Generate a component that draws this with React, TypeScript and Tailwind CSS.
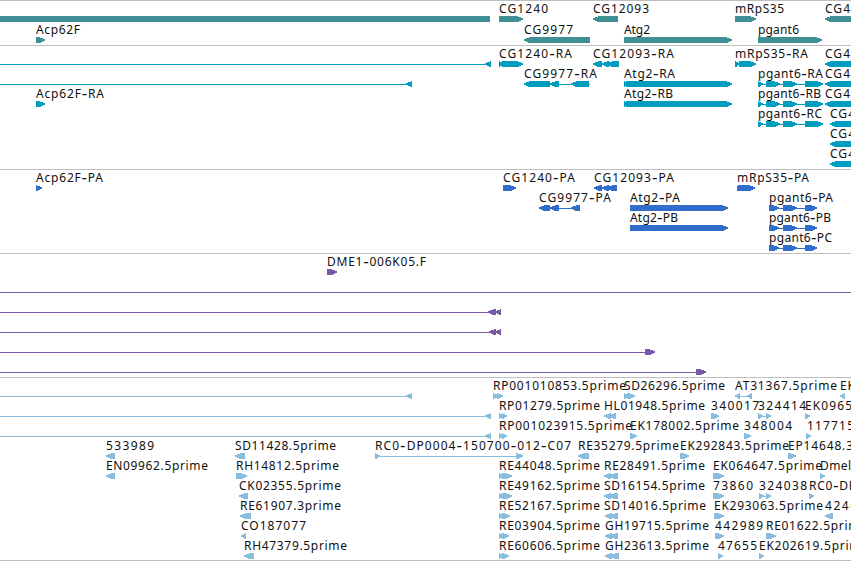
import React from 'react';

type Dir = 'l' | 'r' | 'n';
type Exon = [number, number, Dir];
type Label = [string, number, number];
interface Row {
  labels?: Label[];
  exons?: Exon[];
  lines?: [number, number][];
}
interface TrackData {
  height: number;
  color: string;
  pitch: number;
  rows: Row[];
}

// How far the pointed end is set back on each pixel row of the 6px glyph.
const TAPER = [5, 2, 0, 0, 2, 4];

function exonPath([a, b, dir]: Exon, y: number): string {
  if (dir === 'n') return `M${a} ${y}H${b}V${y + 6}H${a}Z`;
  const scale = Math.min(1, (b - a) / 6);
  return TAPER.map((t, i) => {
    const inset = Math.round(t * scale);
    const s = dir === 'l' ? a + inset : a;
    const e = dir === 'r' ? b - inset : b;
    return `M${s} ${y + i}H${e}v1H${s}Z`;
  }).join('');
}

const pgRna: Exon[] = [[758, 763, 'r'], [766, 780, 'r'], [783, 797, 'r'], [805, 823, 'r']];
const pgPep: Exon[] = [[769, 779, 'r'], [783, 797, 'r'], [805, 817, 'r']];
const atgRna: Exon[] = [[624, 628, 'r'], [626, 732, 'r']];
const re = (end: number): Exon[] => [[499, 503, 'r'], [502, end, 'r']];
const rev = (start: number, end: number): Exon[] => [[start, start + 7, 'l'], [start + 5, end, 'l']];

const tracks: TrackData[] = [
  {
    height: 45, color: '#3f8f95', pitch: 21,
    rows: [
      {
        labels: [['CG1240', 499, 548], ['CG12093', 593, 649], ['mRpS35', 735, 784], ['CG4', 825, 850]],
        exons: [[0, 490, 'n'], [499, 523, 'r'], [593, 618, 'l'], [735, 756, 'r'], [825, 870, 'l']],
      },
      {
        labels: [['Acp62F', 36, 80], ['CG9977', 524, 573], ['Atg2', 624, 650], ['pgant6', 758, 799]],
        exons: [[36, 45, 'r'], [524, 590, 'l'], [624, 732, 'r'], [758, 822, 'r']],
      },
    ],
  },
  {
    height: 124, color: '#009dbf', pitch: 20,
    rows: [
      {
        labels: [['CG1240-RA', 499, 572], ['CG12093-RA', 593, 674], ['mRpS35-RA', 735, 808], ['CG4', 825, 850]],
        exons: [[485, 491, 'l'], [499, 503, 'r'], [502, 523, 'r'], [593, 602, 'l'], [602, 609, 'l'], [607, 619, 'l'], [735, 740, 'r'], [739, 756, 'r'], [825, 870, 'l']],
        lines: [[0, 491], [593, 619], [735, 756]],
      },
      {
        labels: [['CG9977-RA', 524, 597], ['Atg2-RA', 624, 675], ['pgant6-RA', 758, 823], ['CG4', 825, 850]],
        exons: [[406, 412, 'l'], [524, 550, 'l'], [550, 559, 'l'], [571, 589, 'l'], ...atgRna, ...pgRna, [825, 870, 'l']],
        lines: [[0, 412], [524, 590], [758, 823]],
      },
      {
        labels: [['Acp62F-RA', 36, 104], ['Atg2-RB', 624, 673], ['pgant6-RB', 758, 821], ['CG4', 825, 850]],
        exons: [[36, 45, 'r'], ...atgRna, ...pgRna, [825, 870, 'l']],
        lines: [[758, 823]],
      },
      { labels: [['pgant6-RC', 758, 822], ['CG4', 830, 855]], exons: [...pgRna, [830, 870, 'l']], lines: [[758, 823]] },
      { labels: [['CG4', 830, 855]], exons: [[830, 870, 'l']] },
      { labels: [['CG4', 830, 855]], exons: [[830, 870, 'l']] },
    ],
  },
  {
    height: 84, color: '#316ecc', pitch: 20,
    rows: [
      {
        labels: [['Acp62F-PA', 36, 103], ['CG1240-PA', 503, 575], ['CG12093-PA', 594, 674], ['mRpS35-PA', 737, 809]],
        exons: [[36, 42, 'r'], [503, 516, 'r'], [594, 602, 'l'], [602, 609, 'l'], [607, 617, 'l'], [737, 740, 'r'], [738, 755, 'r']],
        lines: [[594, 617]],
      },
      {
        labels: [['CG9977-PA', 539, 611], ['Atg2-PA', 630, 680], ['pgant6-PA', 769, 833]],
        exons: [[539, 550, 'l'], [550, 559, 'l'], [571, 580, 'l'], [630, 728, 'r'], ...pgPep],
        lines: [[539, 580], [769, 817]],
      },
      { labels: [['Atg2-PB', 630, 678], ['pgant6-PB', 769, 831]], exons: [[630, 728, 'r'], ...pgPep], lines: [[769, 817]] },
      { labels: [['pgant6-PC', 769, 832]], exons: pgPep, lines: [[769, 817]] },
    ],
  },
  {
    height: 124, color: '#7859a7', pitch: 20,
    rows: [
      { labels: [['DME1-006K05.F', 327, 426]], exons: [[327, 337, 'r']] },
      { lines: [[0, 851]] },
      { lines: [[0, 501]], exons: [[488, 496, 'l'], [495, 501, 'l']] },
      { lines: [[0, 501]], exons: [[489, 496, 'l'], [495, 501, 'l']] },
      { lines: [[0, 655]], exons: [[645, 655, 'r']] },
      { lines: [[0, 706]], exons: [[696, 706, 'r']] },
    ],
  },
  {
    height: 183, color: '#88bddd', pitch: 20,
    rows: [
      {
        labels: [['RP001010853.5prime', 493, 626], ['SD26296.5prime', 624, 725], ['AT31367.5prime', 735, 837], ['EK', 840, 855]],
        exons: [[493, 499, 'r'], [497, 503, 'r'], [624, 629, 'r'], [627, 635, 'r'], [406, 412, 'l'], [735, 740, 'l'], [747, 752, 'l'], [840, 845, 'l']],
        lines: [[0, 412], [735, 752]],
      },
      {
        labels: [['RP01279.5prime', 499, 600], ['HL01948.5prime', 604, 705], ['340017', 711, 759], ['324414', 758, 806], ['EK0965', 805, 852]],
        exons: [[485, 491, 'l'], ...re(507), ...rev(604, 616), [711, 719, 'r'], [758, 763, 'r'], [766, 771, 'r'], [805, 810, 'r']],
        lines: [[0, 491], [758, 771]],
      },
      {
        labels: [['RP001023915.5prime', 499, 632], ['EK178002.5prime', 630, 739], ['348004', 744, 792], ['117715', 807, 854]],
        exons: [[485, 491, 'l'], ...re(507), [630, 637, 'r'], [744, 751, 'r'], [806, 811, 'r']],
        lines: [[0, 491]],
      },
      {
        labels: [['533989', 106, 154], ['SD11428.5prime', 235, 336], ['RC0-DP0004-150700-012-C07', 375, 571], ['RE35279.5prime', 578, 679], ['EK292843.5prime', 680, 789], ['EP14648.3', 788, 853]],
        exons: [[106, 115, 'l'], [235, 245, 'l'], [375, 380, 'r'], [516, 523, 'r'], [578, 589, 'l'], [680, 689, 'r'], [788, 796, 'r']],
        lines: [[375, 523]],
      },
      {
        labels: [['EN09962.5prime', 106, 208], ['RH14812.5prime', 236, 339], ['RE44048.5prime', 499, 600], ['RE28491.5prime', 604, 705], ['EK064647.5prime', 713, 822], ['Dmel', 820, 851]],
        exons: [[106, 115, 'l'], [236, 247, 'r'], ...re(512), ...rev(604, 618), [713, 724, 'r'], [820, 825, 'r']],
      },
      {
        labels: [['CK02355.5prime', 239, 341], ['RE49162.5prime', 499, 600], ['SD16154.5prime', 604, 705], ['73860', 713, 753], ['324038', 759, 807], ['RC0-DP', 809, 856]],
        exons: [[239, 248, 'l'], ...re(512), ...rev(604, 618), [713, 724, 'r'], [759, 764, 'r'], [766, 771, 'r'], [809, 814, 'r']],
        lines: [[759, 771]],
      },
      {
        labels: [['RE61907.3prime', 240, 341], ['RE52167.5prime', 499, 600], ['SD14016.5prime', 604, 706], ['EK293063.5prime', 714, 823], ['4246', 825, 857]],
        exons: [[240, 251, 'l'], ...re(510), ...rev(605, 618), [714, 724, 'r'], [825, 833, 'l']],
      },
      {
        labels: [['CO187077', 241, 306], ['RE03904.5prime', 499, 600], ['GH19715.5prime', 605, 709], ['442989', 715, 763], ['RE01622.5prime', 766, 867]],
        exons: [[241, 246, 'l'], ...re(509), ...rev(605, 618), [715, 724, 'r'], [766, 776, 'r']],
      },
      {
        labels: [['RH47379.5prime', 244, 347], ['RE60606.5prime', 499, 600], ['GH23613.5prime', 605, 709], ['47655', 718, 757], ['EK202619.5prime', 759, 868]],
        exons: [[244, 254, 'l'], ...re(509), ...rev(605, 619), [718, 723, 'r'], [759, 764, 'r']],
      },
    ],
  },
];

// Hyphens are set larger than the rest of a name, which makes them longer.
function nameParts(text: string) {
  return text.split(/(-)/).map((part, i) =>
    part === '-' ? <tspan key={i} dy="1" className="text-[17px]">-</tspan> : <tspan key={i} dy={i > 0 ? -1 : 0}>{part}</tspan>,
  );
}

function Track({ track }: { track: TrackData }) {
  return (
    <section className="w-full shrink-0 overflow-hidden border-t border-[#bebebe]" style={{ height: track.height }}>
      <svg width="851" height={track.height - 1} className="block overflow-hidden">
        {track.rows.map((row, i) => {
          const top = i * track.pitch;
          return (
            <g key={i}>
              <g fill={track.color} shapeRendering="crispEdges">
                {row.lines?.map(([a, b], k) => (
                  <rect key={k} x={a} y={top + 18} width={b - a} height="1" />
                ))}
                {row.exons?.map((e, k) => <path key={k} d={exonPath(e, top + 15)} />)}
              </g>
              {row.labels?.map(([text, a, b], k) => (
                <text key={k} x={a} y={top + 12} textLength={b - a} lengthAdjust="spacing" fill="#111">
                  {nameParts(text)}
                </text>
              ))}
            </g>
          );
        })}
      </svg>
    </section>
  );
}

export default function App() {
  return (
    <main className="flex h-[561px] w-[851px] flex-col overflow-hidden bg-white font-['Noto_Sans',sans-serif] text-[12px]">
      {tracks.map((track, i) => <Track key={i} track={track} />)}
      <div className="h-px w-full shrink-0 bg-[#bebebe]" />
    </main>
  );
}
